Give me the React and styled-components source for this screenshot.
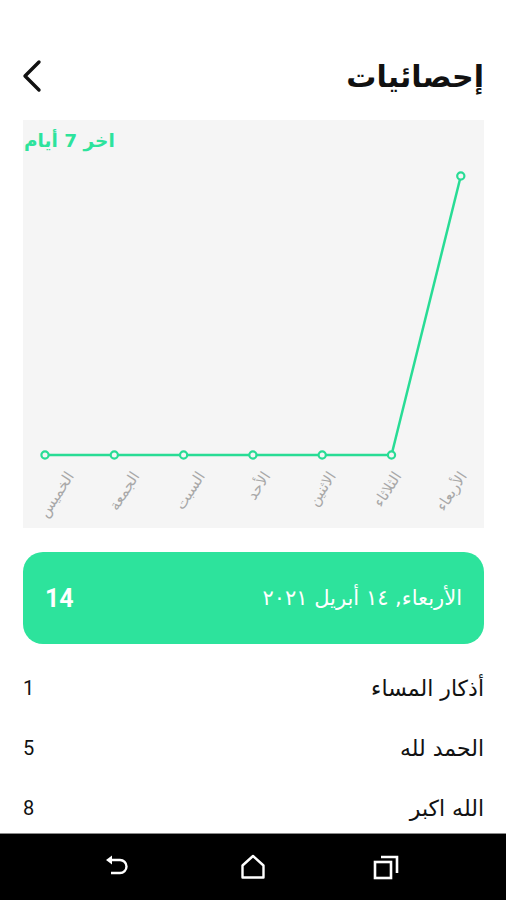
import React from "react";
import styled, { createGlobalStyle } from "styled-components";

const GREEN = "#2de39c";
const LINE = "#28dc95";

const days = ["الخميس", "الجمعة", "السبت", "الأحد", "الاثنين", "الثلاثاء", "الأربعاء"];
const values = [0, 0, 0, 0, 0, 0, 14];

const items = [
  { name: "أذكار المساء", count: 1 },
  { name: "الحمد لله", count: 5 },
  { name: "الله اكبر", count: 8 },
];

const GlobalStyle = createGlobalStyle`
  html, body {
    margin: 0;
    padding: 0;
    background: #fff;
  }
  body {
    font-family: "DejaVu Sans", "Noto Sans", sans-serif;
  }
`;

function Chart() {
  const w = 461;
  const h = 372;
  const xs = days.map((_, i) => 22 + i * 69.3);
  const top = 20;
  const base = 299;
  const max = Math.max(...values);
  const ys = values.map(v => base - (v / max) * (base - top));
  const pts = xs.map((x, i) => `${x},${ys[i]}`).join(" ");

  return (
    <ChartSvg width={w} height={h} viewBox={`0 0 ${w} ${h}`}>
      <polyline points={pts} fill="none" stroke={LINE} strokeWidth="2.5" strokeLinejoin="round" />
      {xs.map((x, i) => (
        <circle key={i} cx={x} cy={ys[i]} r="3.6" fill="#f5f5f5" stroke={LINE} strokeWidth="2.2" />
      ))}
      {days.map((d, i) => {
        const lx = 51.5 + i * 65.5;
        const ly = 320;
        return (
          <text
            key={d}
            x={lx}
            y={ly}
            textAnchor="end"
            fontSize="15"
            fill="#a8a8a8"
            transform={`rotate(-57 ${lx} ${ly})`}
          >
            {d}
          </text>
        );
      })}
    </ChartSvg>
  );
}

function BackIcon() {
  return (
    <svg width="28" height="24" viewBox="0 0 28 24">
      <path d="M6 5 L15 5 A6.5 6.5 0 0 1 15 18 L6 18" fill="none" stroke="#fff" strokeWidth="2.4" />
      <path d="M1 5 L7 0.5 L7 9.5 Z" fill="#fff" />
    </svg>
  );
}

function HomeIcon() {
  return (
    <svg width="26" height="26" viewBox="0 0 26 26">
      <path d="M2.5 11.5 L13 2 L23.5 11.5 L23.5 23.5 L2.5 23.5 Z" fill="none" stroke="#fff" strokeWidth="2.4" strokeLinejoin="round" />
    </svg>
  );
}

function RecentsIcon() {
  return (
    <svg width="28" height="28" viewBox="0 0 28 28">
      <rect x="2" y="9" width="16" height="16" fill="none" stroke="#fff" strokeWidth="2.6" />
      <path d="M8 4 L24 4 L24 20" fill="none" stroke="#fff" strokeWidth="2.6" />
    </svg>
  );
}

function App() {
  return (
    <Screen dir="rtl">
      <GlobalStyle />
      <Content>
        <Header>
          <Title>إحصائيات</Title>
          <BackButton>
            <svg width="22" height="34" viewBox="0 0 22 34">
              <path d="M18 3 L4 17 L18 31" fill="none" stroke="#111" strokeWidth="3.4" strokeLinecap="round" strokeLinejoin="round" />
            </svg>
          </BackButton>
        </Header>

        <Panel>
          <PanelTitle>اخر 7 أيام</PanelTitle>
          <Chart />
        </Panel>

        <DayCard>
          <DateText>الأربعاء, ١٤ أبريل ٢٠٢١</DateText>
          <Total>14</Total>
        </DayCard>

        <List>
          {items.map(it => (
            <Row key={it.name}>
              <RowName>{it.name}</RowName>
              <RowCount>{it.count}</RowCount>
            </Row>
          ))}
        </List>
      </Content>

      <NavBar dir="ltr">
        <NavButton><BackIcon /></NavButton>
        <NavButton><HomeIcon /></NavButton>
        <NavButton><RecentsIcon /></NavButton>
      </NavBar>
    </Screen>
  );
}

const Screen = styled.div`
  width: 506px;
  height: 900px;
  display: flex;
  flex-direction: column;
  background: #fff;
  overflow: hidden;
`;

const Content = styled.div`
  flex: 1;
  overflow: hidden;
  padding: 0 22px 0 23px;
  display: flex;
  flex-direction: column;

  & > * {
    flex-shrink: 0;
  }
`;

const Header = styled.div`
  height: 54px;
  margin-top: 49px;
  display: flex;
  align-items: center;
  justify-content: space-between;
`;

const Title = styled.h1`
  margin: 0;
  font-size: 30px;
  font-weight: bold;
  color: #111;
`;

const BackButton = styled.div`
  display: flex;
  align-items: center;
  margin-left: -2px;
`;

const Panel = styled.div`
  margin-top: 17px;
  height: 408px;
  background: #f5f5f5;
  display: flex;
  flex-direction: column;
  align-items: stretch;
`;

const PanelTitle = styled.div`
  height: 36px;
  box-sizing: border-box;
  padding-top: 4px;
  display: flex;
  align-items: center;
  align-self: flex-end;
  padding-left: 1px;
  font-size: 18.5px;
  font-weight: bold;
  color: ${GREEN};
`;

const ChartSvg = styled.svg`
  display: block;
  direction: ltr;
  font-family: "DejaVu Sans", sans-serif;
`;

const DayCard = styled.div`
  margin-top: 24px;
  height: 92px;
  border-radius: 20px;
  background: ${GREEN};
  color: #fff;
  display: flex;
  align-items: center;
  justify-content: space-between;
  padding: 0 22px;
`;

const DateText = styled.div`
  font-size: 21px;
`;

const Total = styled.div`
  font-size: 25px;
  font-weight: bold;
  font-family: "Roboto", sans-serif;
`;

const List = styled.div`
  margin-top: 14px;
  display: flex;
  flex-direction: column;
`;

const Row = styled.div`
  height: 60px;
  display: flex;
  align-items: center;
  justify-content: space-between;
  flex-shrink: 0;
`;

const RowName = styled.div`
  font-size: 22px;
  color: #111;
`;

const RowCount = styled.div`
  font-size: 20px;
  color: #111;
  font-family: "Roboto", sans-serif;
`;

const NavBar = styled.div`
  height: 66px;
  flex-shrink: 0;
  background: #000;
  border-top: 1px solid #8a8a8a;
  display: flex;
  align-items: center;
  justify-content: center;
  gap: 104px;
`;

const NavButton = styled.div`
  width: 30px;
  display: flex;
  justify-content: center;
  align-items: center;
`;

export default App;
